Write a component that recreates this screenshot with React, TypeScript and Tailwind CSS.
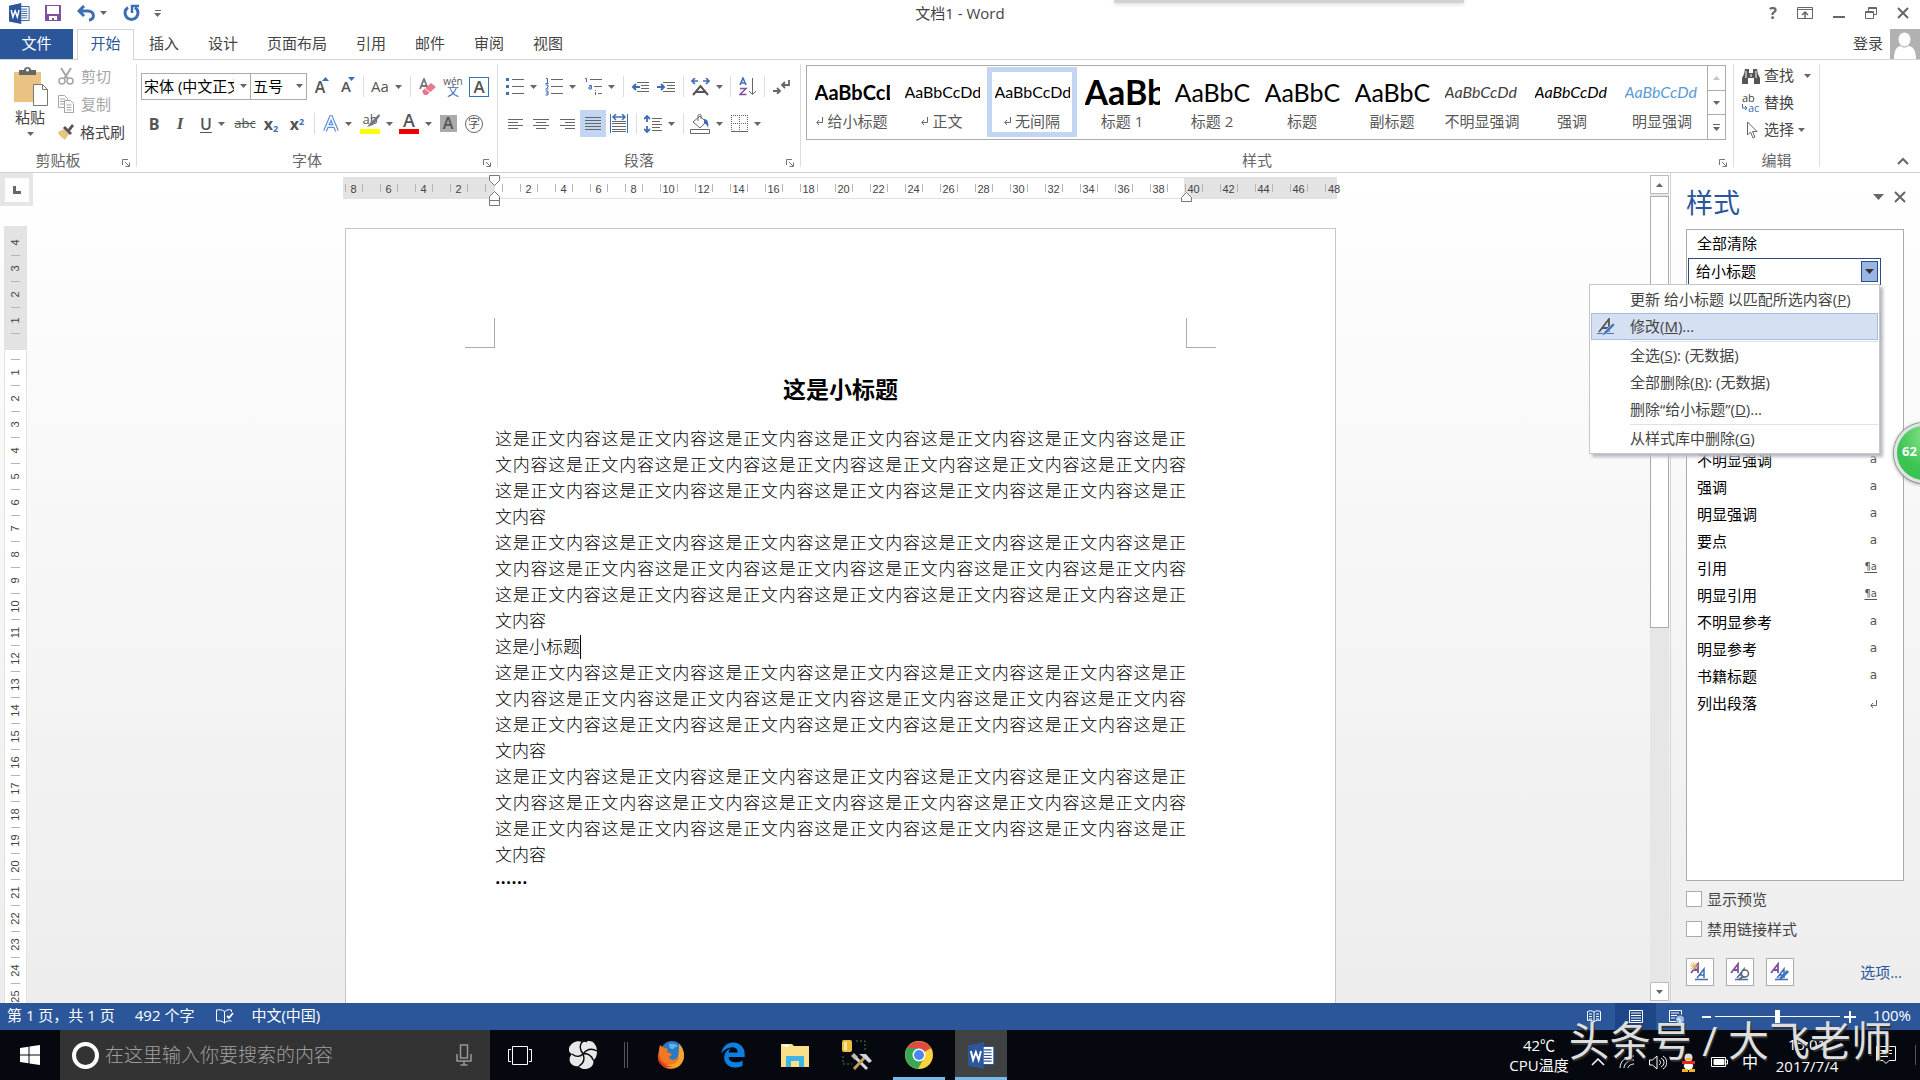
import type { ReactNode } from "react";
import { FaEdgeLegacy } from "react-icons/fa";

const LINE_FULL_A = "这是正文内容这是正文内容这是正文内容这是正文内容这是正文内容这是正文内容这是正";
const LINE_FULL_B = "文内容这是正文内容这是正文内容这是正文内容这是正文内容这是正文内容这是正文内容";
const LINE_LAST = "文内容";

const TABS = ["插入", "设计", "页面布局", "引用", "邮件", "审阅", "视图"];

interface GalleryItem {
    label: string;
    sample: string;
    sampleClass: string;
    mark?: boolean;
    active?: boolean;
}

const GALLERY: GalleryItem[] = [
    { label: "给小标题", sample: "AaBbCcDd", sampleClass: "text-[20px] font-bold text-black", mark: true },
    { label: "正文", sample: "AaBbCcDd", sampleClass: "text-[16px] text-black", mark: true },
    { label: "无间隔", sample: "AaBbCcDd", sampleClass: "text-[16px] text-black", mark: true, active: true },
    { label: "标题 1", sample: "AaBbCc", sampleClass: "text-[34px] font-bold text-black" },
    { label: "标题 2", sample: "AaBbC", sampleClass: "text-[25px] text-black" },
    { label: "标题", sample: "AaBbC", sampleClass: "text-[25px] text-black" },
    { label: "副标题", sample: "AaBbC", sampleClass: "text-[25px] text-black" },
    { label: "不明显强调", sample: "AaBbCcDd", sampleClass: "text-[16px] italic text-[#404040]" },
    { label: "强调", sample: "AaBbCcDd", sampleClass: "text-[16px] italic text-black" },
    { label: "明显强调", sample: "AaBbCcDd", sampleClass: "text-[16px] italic text-[#5b9bd5]" },
];

const STYLE_ROWS = [
    { name: "正文", kind: "p" },
    { name: "无间隔", kind: "p", active: true },
    { name: "标题 1", kind: "pa" },
    { name: "标题 2", kind: "pa" },
    { name: "标题", kind: "pa" },
    { name: "副标题", kind: "pa" },
    { name: "不明显强调", kind: "a" },
    { name: "强调", kind: "a" },
    { name: "明显强调", kind: "a" },
    { name: "要点", kind: "a" },
    { name: "引用", kind: "pa" },
    { name: "明显引用", kind: "pa" },
    { name: "不明显参考", kind: "a" },
    { name: "明显参考", kind: "a" },
    { name: "书籍标题", kind: "a" },
    { name: "列出段落", kind: "p" },
];

const H_RULER = [8, 6, 4, 2, 0, ...Array.from({ length: 24 }, (_, i) => (i + 1) * 2)];
const V_RULER = [4, 3, 2, 1, 0, ...Array.from({ length: 25 }, (_, i) => i + 1)];

function Caret({ className = "text-[#666]" }: { className?: string }) {
    return (
        <svg width="7" height="4" viewBox="0 0 7 4" className={`shrink-0 ${className}`}>
            <path d="M0 0h7L3.500 4z" fill="currentColor" />
        </svg>
    );
}

function Sep() {
    return <div className="ml-1 mr-[3px] h-[21px] w-px bg-[#dcdcdc]" />;
}

function Tool({ label, drop, active, children }: { label: string; drop?: boolean; active?: boolean; children: ReactNode }) {
    return (
        <button
            aria-label={label}
            className={`flex h-[27px] shrink-0 items-center justify-center gap-[6px] ${drop ? "w-[39px]" : "w-[26px]"} ${active ? "bg-[#c2d5f2]" : ""}`}
        >
            {children}
            {drop && <Caret />}
        </button>
    );
}

function Group({ label, launcher = true, className = "", children }: { label: string; launcher?: boolean; className?: string; children: ReactNode }) {
    return (
        <section className={`flex flex-col border-r border-[#dcdcdc] ${className}`}>
            <div className="flex-1">{children}</div>
            <div className={`relative text-center text-[15px] leading-[14px] text-[#666] ${launcher ? "pr-5" : ""}`}>
                {label}
                {launcher && (
                    <button aria-label={`${label}设置`} className="absolute bottom-0 right-[6px]">
                        <svg width="8" height="8" viewBox="0 0 8 8" fill="none" stroke="#777">
                            <path d="M.5 6V.5H6M3 3l4 4M7.500 3.500v4h-4" />
                        </svg>
                    </button>
                )}
            </div>
        </section>
    );
}

/* horizontal strokes given as [x1, x2, y] */
function Lines({ rows, w = 18, h = 16, children }: { rows: number[][]; w?: number; h?: number; children?: ReactNode }) {
    return (
        <svg width={w} height={h} viewBox={`0 0 ${w} ${h}`} className="shrink-0">
            {rows.map(([a, b, y], i) => (
                <path key={i} d={`M${a} ${y + 0.5}H${b}`} stroke="#666" />
            ))}
            {children}
        </svg>
    );
}

function WordIcon({ size }: { size: number }) {
    return (
        <svg width={size} height={size} viewBox="0 0 24 24">
            <path d="M12 4h11v16H12z" fill="#fff" stroke="#2b579a" />
            <path d="M14 7h7M14 9.500h7M14 12h7M14 14.500h7M14 17h7" stroke="#2b579a" />
            <path d="M0 3L14 0v24L0 21z" fill="#2b579a" />
            <path d="M2.500 8l2 8L7 9l2.500 7 2-8" fill="none" stroke="#fff" strokeWidth="1.700" />
        </svg>
    );
}

function TitleBar() {
    return (
        <header className="relative flex h-[29px] shrink-0 items-center justify-between bg-white pb-[3px]">
            <div className="flex items-center pl-[9px] text-[#3d6db5]">
                <WordIcon size={21} />
                <button aria-label="保存" className="ml-[15px]">
                    <svg width="16" height="16" viewBox="0 0 16 16">
                        <path d="M0 0h16v16H0z" fill="#80509f" />
                        <path d="M2 1h12v8H2z" fill="#fff" />
                        <path d="M4 11h8v4H9v-2H7v2H4z" fill="#fff" />
                    </svg>
                </button>
                <button aria-label="撤消" className="ml-4 flex items-center gap-1">
                    <svg width="19" height="17" viewBox="0 0 19 17" fill="none" stroke="currentColor" strokeWidth="3">
                        <path d="M7 1L2 6l5 5M2 6h9c7 0 7 9 1 9" />
                    </svg>
                    <Caret />
                </button>
                <button aria-label="重复" className="ml-4">
                    <svg width="17" height="18" viewBox="0 0 17 18" fill="none" stroke="currentColor" strokeWidth="3">
                        <path d="M5 3.500a6.500 6.500 0 1 0 7 0" />
                        <path d="M9 9V2h7" strokeWidth="2.500" />
                    </svg>
                </button>
                <button aria-label="自定义快速访问工具栏" className="ml-[14px] flex flex-col items-center gap-[2px]">
                    <div className="h-px w-[6px] bg-[#666]" />
                    <Caret />
                </button>
            </div>
            <h1 className="absolute left-1/2 -translate-x-1/2 text-[15px] leading-[20px] text-[#444]">文档1 - Word</h1>
            <div className="absolute left-[58%] top-0 h-[3px] w-[350px] bg-[#d2d2d2] shadow-[0_1px_4px_#ccc]" />
            <div className="flex items-center gap-[20px] pr-[11px] text-[#666]">
                <button aria-label="帮助" className="text-[16px] font-bold leading-[16px]">?</button>
                <button aria-label="功能区显示选项">
                    <svg width="16" height="12" viewBox="0 0 16 12" fill="none" stroke="currentColor">
                        <path d="M.5.5h15v11H.5zM.5 2.500h15" />
                        <path d="M8 11V5M5 8l3-3 3 3" strokeWidth="1.500" />
                    </svg>
                </button>
                <button aria-label="最小化">
                    <svg width="12" height="12" viewBox="0 0 12 12"><path d="M0 9h12v2H0z" fill="currentColor" /></svg>
                </button>
                <button aria-label="还原">
                    <svg width="12" height="12" viewBox="0 0 12 12" fill="none" stroke="currentColor">
                        <path d="M.5 4.500h8v7h-8zM.5 5.500h8M3.500 4V.5h8v7H9M3.500 1.500h8" />
                    </svg>
                </button>
                <button aria-label="关闭">
                    <svg width="12" height="12" viewBox="0 0 12 12" stroke="currentColor" strokeWidth="2"><path d="M1 1l10 10M11 1L1 11" /></svg>
                </button>
            </div>
        </header>
    );
}

function TabBar() {
    return (
        <nav className="flex h-[31px] shrink-0 border-b border-[#d4d4d4] bg-white text-[15px] leading-[24px] text-[#444]">
            <button className="w-[73px] bg-[#2b579a] pb-[3px] text-white">文件</button>
            <button className="-mb-px ml-1 w-[57px] border border-b-0 border-[#d4d4d4] bg-white pb-[4px] text-[#2b579a]">开始</button>
            {TABS.map((t) => (
                <button key={t} className="pb-[3px] pl-[15px] pr-[14px]">{t}</button>
            ))}
            <div className="-mb-px ml-auto flex">
                <button className="px-[7px] pb-[3px]">登录</button>
                <svg width="30" height="30" viewBox="0 0 30 30" className="bg-[#b1b1b1]" fill="#fff">
                    <ellipse cx="14.500" cy="10.500" rx="6" ry="7" />
                    <path d="M4 30c0-9 3-13 7-13 2 2 5 2 7 0 5 0 8 4 8 13z" />
                </svg>
            </div>
        </nav>
    );
}

function ClipboardGroup() {
    return (
        <Group label="剪贴板" className="w-[137px]">
            <div className="flex">
                <button className="flex w-[52px] flex-col items-center pl-[8px] pt-[3px] text-[15px] leading-[22px] text-[#444]">
                    <svg width="35" height="39" viewBox="0 0 35 39" className="ml-[3px]">
                        <path d="M0 5h27v30H0z" fill="#eac282" />
                        <path d="M5 3h5c0-4 7-4 7 0h5v5H5z" fill="#666" />
                        <circle cx="13.500" cy="3" r="1.500" fill="#fff" />
                        <path d="M19.500 17.500h9l5 5v16h-14z" fill="#fff" stroke="#777" />
                        <path d="M28.500 17.500v5h5" fill="none" stroke="#777" />
                    </svg>
                    粘贴
                    <span className="pt-[4px]"><Caret /></span>
                </button>
                <div className="-mt-[2px] flex flex-col pl-[6px] text-[15px] leading-[28px]">
                    <button className="flex items-center gap-[7px] text-[#a6a6a6]">
                        <svg width="16" height="18" viewBox="0 0 16 18" fill="none" stroke="currentColor" strokeWidth="1.500">
                            <path d="M3 1l7 11M13 1L6 12" strokeWidth="2" />
                            <circle cx="4" cy="14" r="3" />
                            <circle cx="12" cy="14" r="3" />
                        </svg>
                        剪切
                    </button>
                    <button className="flex items-center gap-[7px] text-[#a6a6a6]">
                        <svg width="16" height="18" viewBox="0 0 16 18" fill="#fff" stroke="currentColor">
                            <path d="M.5.5h6l3 3v9h-9zM2 4h5M2 6.500h5M2 9h5" />
                            <path d="M6.500 5.500h6l3 3v9h-9zM8.500 10h5M8.500 12.500h5M8.500 15h5" />
                        </svg>
                        复制
                    </button>
                    <button className="flex items-center gap-[6px] text-[#444]">
                        <svg width="16" height="16" viewBox="0 0 16 16">
                            <path d="M0 8l6-3 5 5-4 6C5 14 1 12 0 8z" fill="#eac282" />
                            <path d="M5 4l2-2 7 7-2 2zM10 5l4-5 2 2-4 5z" fill="#555" />
                        </svg>
                        格式刷
                    </button>
                </div>
            </div>
        </Group>
    );
}

function FontGroup() {
    return (
        <Group label="字体" className="w-[361px]">
            <div className="flex flex-col gap-[10px] pl-1 pt-[9px] text-[#555]">
                <div className="flex items-center">
                    <div className="relative w-[110px]">
                        <select aria-label="字体" className="h-[27px] w-full appearance-none border border-[#ababab] bg-white pl-[2px] pr-4 text-[15px] text-black">
                            <option>宋体 (中文正文)</option>
                        </select>
                        <span className="pointer-events-none absolute right-[4px] top-[11px]"><Caret /></span>
                    </div>
                    <div className="relative w-[56px]">
                        <select aria-label="字号" className="h-[27px] w-full appearance-none border border-l-0 border-[#ababab] bg-white pl-[2px] pr-4 text-[15px] text-black">
                            <option>五号</option>
                        </select>
                        <span className="pointer-events-none absolute right-[4px] top-[11px]"><Caret /></span>
                    </div>
                    <Tool label="增大字号">
                        <span className="relative text-[16px] font-semibold">A<span className="absolute -right-1 top-[2px] rotate-180 text-[8px]"><Caret className="text-[#3d6db5]" /></span></span>
                    </Tool>
                    <Tool label="缩小字号">
                        <span className="relative text-[15px] font-semibold">A<span className="absolute -right-1 top-[2px]"><Caret className="text-[#3d6db5]" /></span></span>
                    </Tool>
                    <Sep />
                    <Tool label="更改大小写" drop><span className="text-[15px]">Aa</span></Tool>
                    <Sep />
                    <Tool label="清除格式">
                        <svg width="17" height="18" viewBox="0 0 17 18">
                            <path d="M1 11L5 1l4 10M2.500 8h5" fill="none" stroke="#777" strokeWidth="1.800" />
                            <path d="M3 13l9-8 5 4-9 8H5z" fill="#e8798c" />
                            <path d="M6 10.500l5 4" stroke="#fff" />
                        </svg>
                    </Tool>
                    <Tool label="拼音指南">
                        <span className="flex flex-col items-center text-[10px] leading-[9px]">wén<span className="text-[12px] leading-[11px] text-[#3d6db5]">文</span></span>
                    </Tool>
                    <Tool label="字符边框">
                        <span className="flex h-[20px] w-[20px] items-center justify-center border border-[#2e75b6] text-[17px] font-semibold leading-[18px]">A</span>
                    </Tool>
                </div>
                <div className="flex items-center">
                    <Tool label="加粗"><b className="text-[16px]">B</b></Tool>
                    <Tool label="倾斜"><i className="font-['Liberation_Serif'] text-[17px] font-bold">I</i></Tool>
                    <Tool label="下划线" drop><span className="text-[16px] font-semibold underline underline-offset-2">U</span></Tool>
                    <Tool label="删除线"><s className="text-[13px]">abc</s></Tool>
                    <Tool label="下标"><span className="text-[16px] font-bold">x<sub className="text-[9px] text-[#3d6db5]">2</sub></span></Tool>
                    <Tool label="上标"><span className="text-[16px] font-bold">x<sup className="text-[9px] text-[#3d6db5]">2</sup></span></Tool>
                    <Sep />
                    <Tool label="文本效果" drop>
                        <svg width="16" height="18" viewBox="0 0 16 18" fill="none">
                            <path d="M2 16L8 2l6 14M4.500 11h7" stroke="#5b93d8" strokeWidth="4" />
                            <path d="M2 16L8 2l6 14M4.500 11h7" stroke="#fff" strokeWidth="1.500" />
                        </svg>
                    </Tool>
                    <Tool label="突出显示" drop>
                        <span className="relative flex h-[20px] w-[20px] flex-col border-b-[5px] border-[#ffff00] text-[13px] leading-[11px]">
                            ab
                            <svg width="14" height="13" viewBox="0 0 14 13" className="absolute right-0 top-0">
                                <path d="M13 0l1 2-7 9-6 2 3-4z" fill="#777" />
                            </svg>
                        </span>
                    </Tool>
                    <Tool label="字体颜色" drop>
                        <span className="flex h-[20px] w-[20px] items-end justify-center border-b-[5px] border-[#ee0000] text-[18px] font-semibold leading-[17px]">A</span>
                    </Tool>
                    <Tool label="字符底纹">
                        <span className="flex h-[17px] w-[17px] items-center justify-center bg-[#ababab] text-[16px] font-semibold leading-[17px]">A</span>
                    </Tool>
                    <Tool label="带圈字符">
                        <span className="flex h-[18px] w-[18px] items-center justify-center rounded-full border border-[#666] text-[12px] leading-[12px]">字</span>
                    </Tool>
                </div>
            </div>
        </Group>
    );
}

function ParagraphGroup() {
    return (
        <Group label="段落" className="w-[303px]">
            <div className="flex flex-col gap-[10px] pl-1 pt-[9px]">
                <div className="flex items-center">
                    <Tool label="项目符号" drop>
                        <Lines rows={[[6, 18, 1], [6, 18, 8], [6, 18, 15]]} h={17}>
                            <path d="M0 0h3v3H0zM0 7h3v3H0zM0 14h3v3H0z" fill="#3d6db5" />
                        </Lines>
                    </Tool>
                    <Tool label="编号" drop>
                        <Lines rows={[[6, 18, 1], [6, 18, 8], [6, 18, 15]]} h={18}>
                            <path d="M1 .5h1.500V5M.5 5.500h3M.5 7h2.500v2L.8 11h2.700M.5 13h2.500v4H.5M1 15h2" fill="none" stroke="#3d6db5" />
                        </Lines>
                    </Tool>
                    <Tool label="多级列表" drop>
                        <Lines rows={[[6, 18, 1], [10, 18, 8], [14, 18, 15]]} h={18}>
                            <path d="M1 .5h1.500V4M5 7.500h2.500V11H5V9h2.500M11.500 12v1M11.500 14v3" fill="none" stroke="#3d6db5" />
                        </Lines>
                    </Tool>
                    <Sep />
                    <Tool label="减少缩进量">
                        <Lines rows={[[6, 18, 1], [10, 18, 4], [10, 18, 7], [6, 18, 10]]} h={12}>
                            <path d="M9 6H2M5 3L2 6l3 3" fill="none" stroke="#3d6db5" strokeWidth="2" />
                        </Lines>
                    </Tool>
                    <Tool label="增加缩进量">
                        <Lines rows={[[6, 18, 1], [10, 18, 4], [10, 18, 7], [6, 18, 10]]} h={12}>
                            <path d="M0 6h7M4 3l3 3-3 3" fill="none" stroke="#3d6db5" strokeWidth="2" />
                        </Lines>
                    </Tool>
                    <Sep />
                    <Tool label="中文版式" drop>
                        <svg width="19" height="18" viewBox="0 0 19 18" fill="none" strokeWidth="2">
                            <path d="M2 17L9.500 8 17 17M5 14h9" stroke="#555" />
                            <path d="M7 3H1M4 0L1 3l3 3M12 3h6M15 0l3 3-3 3" stroke="#3d6db5" strokeWidth="1.600" />
                        </svg>
                    </Tool>
                    <Sep />
                    <Tool label="排序">
                        <svg width="17" height="19" viewBox="0 0 17 19" fill="none">
                            <path d="M1 8L4 1l3 7M2 6h4" stroke="#3d6db5" strokeWidth="1.500" />
                            <path d="M1 11.500h6L1 17.500h6.500" stroke="#80509f" strokeWidth="1.500" />
                            <path d="M13.500 1v16M10 14l3.500 3.500L17 14" stroke="#666" />
                        </svg>
                    </Tool>
                    <Sep />
                    <Tool label="显示编辑标记">
                        <svg width="17" height="14" viewBox="0 0 17 14" fill="none" stroke="#666" strokeWidth="1.800">
                            <path d="M16 0v5H9M12 2L9 5l3 3M0 11h7M4 8l3 3-3 3" />
                        </svg>
                    </Tool>
                </div>
                <div className="flex items-center">
                    <Tool label="左对齐"><Lines w={15} h={12} rows={[[0, 15, 1], [0, 10, 4], [0, 15, 7], [0, 10, 10]]} /></Tool>
                    <Tool label="居中"><Lines w={16} h={12} rows={[[0, 16, 1], [3, 13, 4], [0, 16, 7], [3, 13, 10]]} /></Tool>
                    <Tool label="右对齐"><Lines w={15} h={12} rows={[[0, 15, 1], [5, 15, 4], [0, 15, 7], [5, 15, 10]]} /></Tool>
                    <Tool label="两端对齐" active><Lines w={16} h={14} rows={[[0, 16, 0], [0, 16, 3], [0, 16, 6], [0, 16, 9], [0, 16, 12]]} /></Tool>
                    <Tool label="分散对齐">
                        <Lines w={18} h={19} rows={[[2, 16, 7], [2, 16, 9], [2, 16, 12], [2, 16, 15], [2, 16, 17]]}>
                            <path d="M.5 0v19M17.500 0v19" stroke="#3d6db5" />
                            <path d="M4 3h10M6 0L3 3l3 3M12 0l3 3-3 3" fill="none" stroke="#3d6db5" strokeWidth="1.500" />
                        </Lines>
                    </Tool>
                    <Sep />
                    <Tool label="行距" drop>
                        <Lines w={18} h={18} rows={[[8, 18, 3], [8, 16, 6], [8, 18, 9], [8, 16, 12], [8, 18, 15]]}>
                            <path d="M3 2v5M3 11v5M0 4l3-3 3 3M0 14l3 3 3-3" fill="none" stroke="#3d6db5" strokeWidth="1.800" />
                        </Lines>
                    </Tool>
                    <Sep />
                    <Tool label="底纹" drop>
                        <svg width="20" height="20" viewBox="0 0 20 20" fill="none" stroke="#666">
                            <path d="M3 8l7-6 6 6-6 6zM8 7V1.500c0-1.500 3-1.500 3 0V5" />
                            <path d="M14 5c4 0 5 4 4 9-1-3-2-4-4-5z" fill="#3d6db5" stroke="none" />
                            <path d="M.5 15.500h19v4H.5z" />
                        </svg>
                    </Tool>
                    <Tool label="边框" drop>
                        <svg width="17" height="17" viewBox="0 0 17 17" fill="none" stroke="#666" strokeDasharray="1 1">
                            <path d="M.5 0v16M8.500 0v16M16.500 0v16M0 .5h17M0 8.500h17" />
                            <path d="M0 16.500h17" strokeDasharray="none" />
                        </svg>
                    </Tool>
                </div>
            </div>
        </Group>
    );
}

function StyleGallery() {
    return (
        <Group label="样式" className="flex-1">
            <div className="ml-[5px] mr-[7px] mt-px flex h-[75px] border border-[#ababab] bg-white">
                <div className="flex flex-1 overflow-hidden pt-px">
                    {GALLERY.map((g) => (
                        <button key={g.label} className={`flex h-[70px] w-[90px] shrink-0 flex-col items-center border-[5px] px-[3px] ${g.active ? "border-[#c2d5f2]" : "border-transparent"}`}>
                            <span className={`block h-[39px] w-[75px] overflow-hidden whitespace-nowrap text-left font-['Lato'] leading-[40px] ${g.sampleClass}`}>{g.sample}</span>
                            <span className="flex items-center gap-1 whitespace-nowrap text-[15px] leading-[20px] text-[#595959]">
                                {g.mark && <ReturnMark />}
                                {g.label}
                            </span>
                        </button>
                    ))}
                </div>
                <div className="flex w-[18px] flex-col border-l border-[#ababab]">
                    <button aria-label="上一行" className="flex flex-1 items-center justify-center"><span className="rotate-180"><Caret className="text-[#c4c4c4]" /></span></button>
                    <button aria-label="下一行" className="flex flex-1 items-center justify-center border-y border-[#ababab]"><Caret /></button>
                    <button aria-label="其他" className="flex flex-1 flex-col items-center justify-center gap-[2px]"><span className="h-px w-[7px] bg-[#666]" /><Caret /></button>
                </div>
            </div>
        </Group>
    );
}

function ReturnMark() {
    return (
        <svg width="7" height="8" viewBox="0 0 7 8" fill="none" stroke="#666">
            <path d="M6.500 0v5.500H1M3 3L.8 5.500 3 8" />
        </svg>
    );
}

function EditGroup() {
    return (
        <Group label="编辑" launcher={false} className="w-[86px]">
            <div className="-mt-[2px] flex flex-col pl-[8px] text-[15px] leading-[27px] text-[#444]">
                <button className="flex items-center gap-1">
                    <svg width="18" height="16" viewBox="0 0 18 16" fill="#555">
                        <path d="M3 1h4v4h4V1h4l1 5 2 4v6h-6v-6H6v6H0v-6l2-4z" />
                        <path d="M4 3v7M14 3v7M9 6v3" stroke="#fff" />
                    </svg>
                    查找
                    <span className="ml-[6px]"><Caret /></span>
                </button>
                <button className="flex items-center gap-1">
                    <span className="relative h-[20px] w-[18px] text-left text-[11px] leading-[10px]">
                        ab
                        <span className="flex items-center text-[#3d6db5]">
                            <svg width="6" height="7" viewBox="0 0 6 7" fill="none" stroke="currentColor"><path d="M.5 0v4H5M3 2l2 2-2 2" /></svg>
                            ac
                        </span>
                    </span>
                    替换
                </button>
                <button className="flex items-center gap-1">
                    <svg width="18" height="18" viewBox="0 0 18 18" fill="#fff" stroke="#666">
                        <path d="M5.500 1v13l3-3 2.500 6 2-1-2.500-5.500H15z" />
                    </svg>
                    选择
                    <Caret />
                </button>
            </div>
        </Group>
    );
}

function HRuler() {
    return (
        <div className="relative flex h-[22px] w-full items-center border-y border-[#e2e2e2] bg-[linear-gradient(to_right,#e3e3e3_152px,#fff_152px,#fff_841px,#e3e3e3_841px)] text-[11px] leading-[10px] text-[#444]">
            <div className="-ml-[7px] flex">
                {H_RULER.map((n, i) => (
                    <div key={i} className="flex w-[35px] shrink-0 justify-center">
                        <div className={`flex h-[8px] w-[18px] justify-center border-l border-[#b5b5b5] font-['Liberation_Sans'] ${n === 48 ? "" : "border-r"}`}>
                            {n || ""}
                        </div>
                    </div>
                ))}
            </div>
            <svg width="12" height="36" viewBox="0 0 12 36" className="absolute left-[146px] -top-[3px]" fill="#fff" stroke="#777">
                <path d="M.5.5h10v5l-5 5-5-5zM5.500 16.500l5 5v4H.5v-4zM.5 25.500h10v5H.5z" />
            </svg>
            <svg width="12" height="11" viewBox="0 0 12 11" className="absolute left-[838px] top-[14px]" fill="#fff" stroke="#777">
                <path d="M5.500.5l5 5v4H.5v-4z" />
            </svg>
        </div>
    );
}

function VRuler() {
    return (
        <div className="flex w-[33px] shrink-0 flex-col overflow-hidden">
            <div className="flex h-[33px] w-[33px] shrink-0 items-center justify-center bg-[#e6e6e6]">
                <button aria-label="制表符" className="flex h-6 w-6 items-center justify-center bg-[#fdfdfd]">
                    <span className="h-[8px] w-[8px] border-b-[3px] border-l-[3px] border-[#666]" />
                </button>
            </div>
            <div className="ml-1 mt-[20px] flex w-[23px] shrink-0 flex-col items-center border-x border-[#e2e2e2] bg-[linear-gradient(to_bottom,#e3e3e3_124px,#fff_124px)] pt-1">
                {V_RULER.map((n, i) => (
                    <div key={i} className="flex h-[26px] w-[9px] items-center justify-center border-b border-[#b5b5b5]">
                        <span className="-rotate-90 font-['Liberation_Sans'] text-[11px] leading-[11px] text-[#444]">{n || ""}</span>
                    </div>
                ))}
            </div>
        </div>
    );
}

function BodyParagraph() {
    return (
        <p>
            {[LINE_FULL_A, LINE_FULL_B, LINE_FULL_A].map((line, i) => (
                <span key={i} className="block whitespace-nowrap [text-align-last:justify]">{line}</span>
            ))}
            <span className="block">{LINE_LAST}</span>
        </p>
    );
}

function Page() {
    return (
        <article className="ml-[2px] mr-px mt-[29px] h-[1200px] border border-[#c6c6c6] bg-white pt-[89px] text-black">
            <div className="flex justify-between px-[119px]">
                <div className="h-[30px] w-[30px] border-b border-r border-[#ababab]" />
                <div className="h-[30px] w-[30px] border-b border-l border-[#ababab]" />
            </div>
            <h2 className="mb-[24px] mt-[28px] text-center text-[23px] font-bold leading-[26px]">这是小标题</h2>
            <div className="px-[149px] text-[17px] font-light leading-[26px]">
                <BodyParagraph />
                <BodyParagraph />
                <p className="flex items-center">这是小标题<span className="h-[24px] w-px bg-black" /></p>
                <BodyParagraph />
                <BodyParagraph />
                <p className="text-[20px] font-semibold leading-[18px]">……</p>
            </div>
        </article>
    );
}

function ScrollBar() {
    return (
        <div className="flex w-[21px] shrink-0 flex-col border-r border-[#d4d4d4] pr-px pt-[2px]">
            <button aria-label="向上滚动" className="flex h-[19px] items-center justify-center border border-[#bcbcbc] bg-white"><span className="rotate-180"><Caret /></span></button>
            <div className="flex-1 bg-[#e6e6e6] pt-[2px]">
                <div className="h-[55%] border border-[#ababab] bg-white" />
            </div>
            <button aria-label="向下滚动" className="mb-[2px] flex h-[19px] items-center justify-center border border-[#bcbcbc] bg-white"><Caret /></button>
        </div>
    );
}

function StyleKind({ kind }: { kind: string }) {
    if (kind === "p") return <ReturnMark />;
    if (kind === "pa") return <span className="block pb-1 font-['DejaVu_Sans'] text-[10px] leading-[12px] underline underline-offset-2">¶a</span>;
    return <span className="block pb-[3px] font-['DejaVu_Sans'] text-[12px]">a</span>;
}

function PenA() {
    return (
        <svg width="18" height="18" viewBox="0 0 18 18" fill="none">
            <path d="M2 14L12 1v13M5 10h7" stroke="#555" strokeWidth="1.800" />
            <path d="M0 15.500h17" stroke="#4472c4" />
            <path d="M16 5l2 2-9 9-4 2 2-4z" fill="#4472c4" stroke="#d5e1f2" strokeWidth=".6" />
        </svg>
    );
}

function StyleMenu() {
    const item = "flex h-[27px] w-full items-center border text-left";
    return (
        <div role="menu" className="absolute -left-[99px] top-[26px] z-10 w-[291px] border border-[#c6c6c6] bg-white px-px py-px text-[15px] leading-[25px] text-[#444] shadow-[3px_3px_3px_#b9b9c4]">
            <button role="menuitem" className={`${item} border-transparent pl-[38px]`}>更新 给小标题 以匹配所选内容(<u>P</u>)</button>
            <button role="menuitem" className={`${item} border-[#a3bde3] bg-[#d5e1f2] pl-[5px]`}>
                <span className="w-[33px]"><PenA /></span>修改(<u>M</u>)...
            </button>
            <hr className="ml-[39px] mt-px border-[#e1e1e1]" />
            <button role="menuitem" className={`${item} border-transparent pl-[38px]`}>全选(<u>S</u>): (无数据)</button>
            <button role="menuitem" className={`${item} border-transparent pl-[38px]`}>全部删除(<u>R</u>): (无数据)</button>
            <button role="menuitem" className={`${item} border-transparent pl-[38px]`}>删除“给小标题”(<u>D</u>)...</button>
            <hr className="ml-[39px] mt-px border-[#e1e1e1]" />
            <button role="menuitem" className={`${item} border-transparent pl-[38px]`}>从样式库中删除(<u>G</u>)</button>
        </div>
    );
}

function AaButton({ label, children }: { label: string; children?: ReactNode }) {
    return (
        <button aria-label={label} className="flex h-[28px] w-[28px] items-center justify-center border border-[#ababab] bg-white">
            <svg width="20" height="20" viewBox="0 0 20 20" fill="none">
                <path d="M1 11L8 2v9M4 8h4" stroke="#80509f" strokeWidth="1.800" />
                <path d="M7 16l7-9v9M9 13h5M5 17.500h13" stroke="#3d6db5" strokeWidth="1.500" />
                {children}
            </svg>
        </button>
    );
}

function StylesPane() {
    return (
        <aside className="relative flex w-[249px] shrink-0 flex-col pl-[15px] pr-4">
            <div className="flex h-[56px] items-start justify-between pt-[12px]">
                <h2 className="text-[27px] leading-[36px] text-[#2b579a]">样式</h2>
                <div className="-mr-[2px] flex items-center gap-[10px] pt-[6px] text-[#666]">
                    <svg width="11" height="6" viewBox="0 0 11 6"><path d="M0 0h11L5.500 6z" fill="currentColor" /></svg>
                    <button aria-label="关闭窗格"><svg width="12" height="12" viewBox="0 0 12 12" stroke="currentColor" strokeWidth="2"><path d="M1 1l10 10M11 1L1 11" /></svg></button>
                </div>
            </div>
            <div className="flex-1 border border-[#ababab] bg-white pt-px text-[15px] leading-[25px] text-black">
                <div className="h-[27px] pl-[10px]">全部清除</div>
                <div className="relative ml-px w-[193px]">
                    <button className="flex h-[27px] w-full items-center justify-between border border-[#2b4a8b] pl-[7px] pr-[2px]">
                        给小标题
                        <span className="flex h-[21px] w-[17px] items-center justify-center border border-[#2b4a8b] bg-[#9ab7e4]">
                            <svg width="9" height="5" viewBox="0 0 9 5"><path d="M0 0h9L4.500 5z" fill="#333" /></svg>
                        </span>
                    </button>
                    <StyleMenu />
                </div>
                <ul className="ml-px w-[193px]">
                    {STYLE_ROWS.map((r) => (
                        <li key={r.name} className={`flex h-[27px] items-center justify-between border pl-[8px] pr-[3px] ${r.active ? "border-[#2b4a8b]" : "border-transparent"}`}>
                            {r.name}
                            <span className="text-[#555]"><StyleKind kind={r.kind} /></span>
                        </li>
                    ))}
                </ul>
            </div>
            <div className="flex flex-col gap-[10px] pt-[8px] text-[15px] leading-[20px] text-[#444]">
                <label className="flex items-center gap-[5px]"><input type="checkbox" className="h-4 w-4 appearance-none border border-[#ababab] bg-white" />显示预览</label>
                <label className="flex items-center gap-[5px]"><input type="checkbox" className="h-4 w-4 appearance-none border border-[#ababab] bg-white" />禁用链接样式</label>
            </div>
            <div className="flex items-center gap-3 pb-[17px] pt-[19px]">
                <AaButton label="新建样式"><path d="M4 0v8M0 4h8M1 1l6 6M7 1L1 7" stroke="#eab45c" /></AaButton>
                <AaButton label="样式检查器"><path d="M9 18l4-4" stroke="#666" strokeWidth="2" /><circle cx="15" cy="11.500" r="3.500" fill="#fff" stroke="#666" strokeWidth="1.500" /></AaButton>
                <AaButton label="管理样式"><path d="M18 9l-8 8" stroke="#4472c4" strokeWidth="3" /></AaButton>
                <a href="#" className="ml-auto mr-[2px] text-[15px] leading-[20px] text-[#2b579a]">选项...</a>
            </div>
            {/* floating memory-cleaner ball docked on the screen edge */}
            <div className="absolute right-0 top-[246px] h-[68px] w-[34px] overflow-hidden">
                <div className="ml-[8px] mt-[4px] flex h-[60px] w-[60px] items-center rounded-full border-[3px] border-[#dfe3e6] bg-[radial-gradient(circle_at_60%_20%,#8ee58f,#3cc453_60%)] pb-[3px] pl-[5px] text-[13px] font-bold text-white shadow-[0_1px_4px_#777] ring-1 ring-[#8a9a8a]">62</div>
            </div>
        </aside>
    );
}

function StatusBar() {
    return (
        <footer className="flex h-[27px] items-center bg-[#2b579a] text-[15px] leading-[20px] text-white">
            <span className="pb-[3px] pl-[7px]">第 1 页，共 1 页</span>
            <span className="ml-5 pb-[3px]">492 个字</span>
            <svg width="18" height="15" viewBox="0 0 18 15" fill="none" stroke="#fff" className="ml-[22px]">
                <path d="M8.500 2.500C6 .5 3 .5.500 1v11c3-.5 6 0 8 2 2-2 4-2.500 7-2M8.500 2.500V14M8.500 2.500C11 .5 13 .5 15.500 1v2" />
                <path d="M11 7l2 2 4-5" strokeWidth="1.800" />
            </svg>
            <span className="ml-[17px] pb-[3px]">中文(中国)</span>
            <div className="ml-auto flex h-full items-center">
                <button aria-label="阅读视图" className="flex w-[42px] justify-center">
                    <svg width="14" height="13" viewBox="0 0 14 13" fill="none" stroke="#fff"><path d="M.5 1.500C3 .5 5 .5 7 2c2-1.500 4-1.500 6.500-.5v9C11 10 9 10 7 12c-2-2-4-2-6.500-1.500zM7 2v10M2 4h3M2 6.500h3M2 9h3M9 4h3M9 6.500h3M9 9h3" /></svg>
                </button>
                <button aria-label="页面视图" className="flex h-full w-[41px] items-center justify-center bg-[#1e4686]">
                    <svg width="14" height="13" viewBox="0 0 14 13" fill="none" stroke="#fff"><path d="M.5.5h13v12H.5zM2 3h10M2 5.500h10M2 8h10M2 10.500h10" /></svg>
                </button>
                <button aria-label="Web 版式视图" className="flex w-[40px] justify-center">
                    <svg width="15" height="14" viewBox="0 0 15 14" fill="none" stroke="#fff"><path d="M7 11.500H.5V.5h12v4M2 3h8M2 5.500h6M2 8h4" /><circle cx="11" cy="9.500" r="4" fill="#9db8dc" stroke="none" /><path d="M8 9h3v4" /></svg>
                </button>
                <button aria-label="缩小" className="ml-[6px] h-[2px] w-[9px] bg-white" />
                <input
                    type="range"
                    aria-label="显示比例"
                    defaultValue={50}
                    className="mx-1 h-[13px] w-[125px] appearance-none bg-[linear-gradient(#fff,#fff)] bg-[length:100%_1px] bg-center bg-no-repeat [&::-webkit-slider-thumb]:h-[13px] [&::-webkit-slider-thumb]:w-[5px] [&::-webkit-slider-thumb]:appearance-none [&::-webkit-slider-thumb]:bg-white"
                />
                <button aria-label="放大">
                    <svg width="12" height="12" viewBox="0 0 12 12" stroke="#fff" strokeWidth="2"><path d="M0 6h12M6 0v12" /></svg>
                </button>
                <span className="w-[64px] pb-[3px] pr-[9px] text-right">100%</span>
            </div>
        </footer>
    );
}

function Task({ label, state, children }: { label: string; state?: "open" | "active"; children: ReactNode }) {
    const stateClass = state === "active" ? "border-[#76b9ed] bg-[#3f4143]" : state === "open" ? "border-[#76b9ed]" : "border-transparent";
    return (
        <button aria-label={label} className={`mx-[5px] flex h-[50px] w-[52px] items-center justify-center border-b-[3px] pt-[3px] ${stateClass}`}>
            {children}
        </button>
    );
}

function TaskBar() {
    return (
        <div className="relative flex h-[50px] items-center bg-[#05080e] text-white">
            <button aria-label="开始菜单" className="flex w-[60px] justify-center">
                <svg width="20" height="20" viewBox="0 0 20 20" fill="#fff">
                    <path d="M0 3l8.500-1.200V9.500H0zM9.500 1.600L20 0v9.500H9.500zM0 10.500h8.500v7.800L0 17zM9.500 10.500H20V20l-10.500-1.600z" />
                </svg>
            </button>
            <div className="flex h-full w-[430px] items-center bg-[#333] pl-[12px]">
                <span className="h-[27px] w-[27px] rounded-full border-[4px] border-white" />
                <input aria-label="搜索" placeholder="在这里输入你要搜索的内容" className="ml-[6px] flex-1 bg-transparent text-[19px] font-light leading-[26px] outline-none placeholder:text-[#a0a0a0]" />
                <svg width="16" height="22" viewBox="0 0 16 22" fill="none" stroke="#999" strokeWidth="1.500" className="mr-[18px]">
                    <path d="M4.500 1h7v13h-7zM1 10v7h14v-7M8 17v4M4.500 21h7" />
                </svg>
            </div>
            <button aria-label="任务视图" className="flex w-[60px] justify-center">
                <svg width="24" height="19" viewBox="0 0 24 19" fill="none" stroke="#fff"><path d="M4.500.5h15v18h-15zM3 3.500H.5v12H3M21 3.500h2.500v12H21" /></svg>
            </button>
            <button aria-label="浏览器" className="flex w-[66px] justify-center">
                <svg width="28" height="28" viewBox="0 0 28 28" fill="#e8e8e8">
                    <path d="M13 1C8-1 2 2 0 7c-1 3 1 5 3 6-2 2-3 5-2 8 2 4 6 5 9 4 2 4 8 4 12 1 2-2 3-4 2-7 3-1 4-5 4-9 0-5-3-10-8-10-3 0-5 0-7 1z" />
                    <path d="M13 1c-3 4-2 8 1 12M3 13c4 3 8 3 11 0M10 25c5-3 6-7 4-12M24 19c-1-4-5-7-10-6M28 10c-5-3-10-2-14 3M13 1c2-1 4-1 5 0" fill="none" stroke="#05080e" strokeWidth="1.400" />
                </svg>
            </button>
            <div className="mx-2 h-[26px] w-[4px] border-x border-[#555]" />
            <div className="w-1" />
            <Task label="Firefox">
                <svg width="28" height="28" viewBox="0 0 28 28">
                    <circle cx="14" cy="15" r="13" fill="#e8601c" />
                    <circle cx="15" cy="11" r="11" fill="#2a78c8" />
                    <path d="M12 3c5-1 8 0 9 3-3-1-3 1-5 2-3 0-4-1-4-5z" fill="#5fb4e8" />
                    <path d="M22 3c6 5 7 15 1 21-6 5-15 4-19-1 6 2 13 1 16-5 2-4 2-10 2-15z" fill="#f5a52f" />
                    <path d="M3 4c2 2 3 3 6 3 2 1 2 3 1 5 2-1 4 0 5 2-1 1-3 1-3 3 3 3 8 2 10-2 0 6-5 9-10 8C4 22 0 13 3 4z" fill="#ef7a22" />
                    <path d="M1 13c1 8 7 13 15 12-7 4-17-1-15-12z" fill="#d9381e" />
                </svg>
            </Task>
            <Task label="Edge"><FaEdgeLegacy className="h-[28px] w-[26px] text-[#0c7fe0]" /></Task>
            <Task label="文件资源管理器">
                <svg width="28" height="26" viewBox="0 0 28 26">
                    <path d="M0 2h11l2 2h15v21H0z" fill="#fbe08a" />
                    <path d="M2 2.500h6v2H2z" fill="#fff" />
                    <path d="M5 25V14h18v11h-5v-6h-8v6z" fill="#3fb4e8" />
                </svg>
            </Task>
            <Task label="系统工具">
                <svg width="30" height="32" viewBox="0 0 30 32" fill="none">
                    <rect x="0" y="1" width="10" height="12" rx="2" fill="#eebd3c" />
                    <path d="M2 3h3v8H2z" fill="#ffe9a5" />
                    <path d="M14 2h9v10M1 17v8h9" stroke="#43803a" strokeDasharray="2 2" />
                    <path d="M12 17l13 13" stroke="#d8d8d8" strokeWidth="3" />
                    <path d="M24 17L12 30" stroke="#c79a5a" strokeWidth="3" />
                    <path d="M17 15h7l6 7-3 2-5-5z" fill="#cfd4da" />
                    <path d="M9 17l3-3 4 4-3 3z" fill="#bbb" />
                </svg>
            </Task>
            <Task label="Chrome" state="open">
                <svg width="28" height="28" viewBox="0 0 28 28">
                    <circle cx="14" cy="14" r="14" fill="#fdd23c" />
                    <path d="M14 14L2 7a14 14 0 0 1 24 0z" fill="#de4b3f" />
                    <path d="M2 7a14 14 0 0 0 11 21l6-11-5-3z" fill="#3aa757" />
                    <path d="M2 7l6 10 6-3-2-7z" fill="#3aa757" />
                    <path d="M26 7H13v4z" fill="#de4b3f" />
                    <circle cx="14" cy="14" r="6.500" fill="#fff" />
                    <circle cx="14" cy="14" r="5" fill="#4a87ee" />
                </svg>
            </Task>
            <Task label="Word" state="active"><WordIcon size={27} /></Task>
            <div className="ml-auto flex h-full items-center">
                <div className="w-[78px] text-center text-[15px] leading-[20px]">42℃<br />CPU温度</div>
                <div className="flex items-center gap-[14px] pl-[13px] pt-[14px]">
                    <svg width="14" height="8" viewBox="0 0 14 8" fill="none" stroke="#fff" strokeWidth="1.500"><path d="M1 7l6-6 6 6" /></svg>
                    <svg width="16" height="14" viewBox="0 0 16 14" fill="none" stroke="#fff"><path d="M1 13C1 6 7 1 15 1M5 13c0-4 4-8 10-8M9 13c0-2 3-4 6-4" /></svg>
                    <svg width="18" height="15" viewBox="0 0 18 15" fill="none" stroke="#fff"><path d="M.5 5h3L8 1v13l-4.500-4h-3zM10 5c2 1 2 4 0 5M12 3c4 2 4 7 0 9M14 1c5 3 5 10 0 13" /></svg>
                    <svg width="15" height="19" viewBox="0 0 15 19">
                        <ellipse cx="7.500" cy="12" rx="6" ry="6" fill="#222" />
                        <ellipse cx="7.500" cy="13" rx="4.500" ry="4" fill="#fff" />
                        <circle cx="7.500" cy="4.500" r="4" fill="#ddd" />
                        <path d="M1 8h13v3H1z" fill="#e8261c" />
                        <path d="M1 16h6v3H1zM8 16h6v3H8zM5 5h5v2H5z" fill="#f6b221" />
                    </svg>
                    <svg width="18" height="12" viewBox="0 0 18 12" fill="none" stroke="#fff"><path d="M1.500 1.500h14v9h-14zM16 4h1.500v4H16" /><path d="M4 3.500h10v5H4z" fill="#fff" /></svg>
                    <span className="text-[16px] leading-[16px]">中</span>
                </div>
                <div className="w-[98px] text-center text-[15px] leading-[22px]">15:01<br />2017/7/4</div>
                <button aria-label="操作中心" className="flex w-[60px] justify-center border-r border-[#555]">
                    <svg width="20" height="20" viewBox="0 0 20 20" fill="none" stroke="#fff"><path d="M.5 1.500h19v14H13l-3 3-3-3H.5zM4 5.500h12M4 8.500h12M4 11.500h8" /></svg>
                </button>
                <div className="w-1" />
            </div>
            <div className="pointer-events-none absolute -top-[14px] right-[28px] whitespace-nowrap text-[41px] leading-[48px] text-[#dedede] [text-shadow:1px_2px_1px_#333]">头条号 / 大飞老师</div>
        </div>
    );
}

export default function App() {
    return (
        <div className="flex h-screen flex-col overflow-hidden bg-white font-['Open_Sans','Noto_Sans_CJK_SC',sans-serif]">
            <TitleBar />
            <TabBar />
            <div className="flex h-[113px] shrink-0 border-b border-[#cfcfcf] bg-white pb-[5px] pt-1">
                <ClipboardGroup />
                <FontGroup />
                <ParagraphGroup />
                <StyleGallery />
                <EditGroup />
                <div className="flex w-[100px] items-end justify-end pr-[11px]">
                    <button aria-label="折叠功能区">
                        <svg width="12" height="10" viewBox="0 0 12 10" fill="none" stroke="#666" strokeWidth="2"><path d="M1 7l5-5 5 5" /></svg>
                    </button>
                </div>
            </div>
            <div className="flex min-h-0 flex-1 bg-linear-to-b from-white to-[#ededed]">
                <VRuler />
                <main className="flex min-w-0 flex-1 justify-center overflow-hidden pr-[3px] pt-1">
                    <div className="w-[994px]">
                        <HRuler />
                        <Page />
                    </div>
                </main>
                <ScrollBar />
                <StylesPane />
            </div>
            <div className="relative z-10 shrink-0">
                <StatusBar />
                <TaskBar />
            </div>
        </div>
    );
}
